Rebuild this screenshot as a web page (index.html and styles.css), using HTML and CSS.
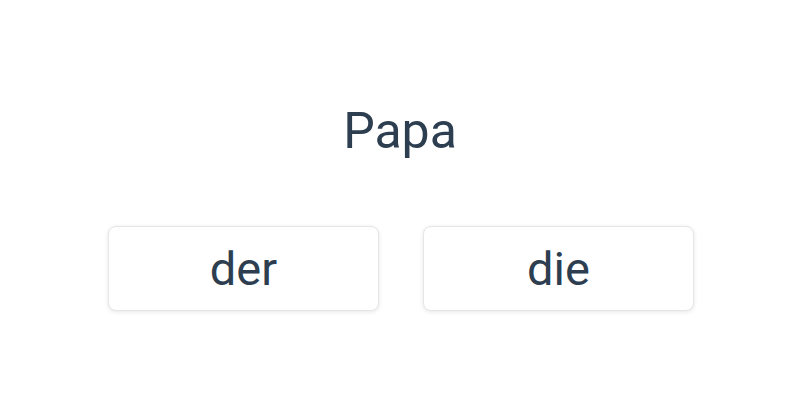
FILE: index.html
```html
<!DOCTYPE html>
<html>
<head>
<meta charset="utf-8">
<link rel="stylesheet" href="styles.css">
</head>
<body>
<main class="card">
  <h1 class="word">Papa</h1>
  <div class="options">
    <button class="option">der</button>
    <button class="option">die</button>
  </div>
</main>
</body>
</html>
```
FILE: styles.css
```css
html, body {
  margin: 0;
  padding: 0;
  background: #ffffff;
  font-family: Roboto, "Noto Sans", sans-serif;
  color: #2c3e50;
}
.card {
  width: 800px;
  height: 400px;
  display: flex;
  flex-direction: column;
  align-items: center;
  box-sizing: border-box;
  padding-top: 101px;
}
.word {
  margin: 0;
  font-size: 50px;
  font-weight: 400;
  line-height: 60px;
  color: #2c3e50;
}
.options {
  display: flex;
  gap: 44px;
  margin-top: 65px;
  margin-left: 2px;
}
.option {
  width: 271px;
  height: 85px;
  background: #ffffff;
  border: 1px solid #e4e6e9;
  border-radius: 8px;
  box-shadow: 0 1px 4px rgba(0,0,0,0.10);
  font-family: Roboto, "Noto Sans", sans-serif;
  font-size: 47px;
  padding: 0;
  color: #2c3e50;
}
```
